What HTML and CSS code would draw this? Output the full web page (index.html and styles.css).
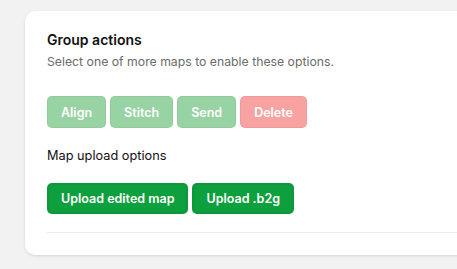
FILE: index.html
```html
<!DOCTYPE html>
<html>
<head>
<meta charset="utf-8">
<link rel="stylesheet" href="styles.css">
</head>
<body>
<div class="card">
  <h2 class="title">Group actions</h2>
  <p class="subtitle">Select one of more maps to enable these options.</p>
  <div class="row actions">
    <button class="btn btn-green" disabled>Align</button>
    <button class="btn btn-green" disabled>Stitch</button>
    <button class="btn btn-green" disabled>Send</button>
    <button class="btn btn-red" disabled>Delete</button>
  </div>
  <p class="label">Map upload options</p>
  <div class="row uploads">
    <button class="btn btn-primary">Upload edited map</button>
    <button class="btn btn-primary">Upload .b2g</button>
  </div>
  <hr class="divider">
</div>
</body>
</html>
```
FILE: styles.css
```css
html, body {
  margin: 0;
  padding: 0;
  background: #f2f2f2;
  overflow: hidden;
  font-family: Inter, "Liberation Sans", sans-serif;
}
body {
  padding: 11px 0 0 25px;
  width: 457px;
  height: 269px;
  box-sizing: border-box;
}
.card {
  width: 445px;
  background: #fff;
  border-radius: 10px;
  box-shadow: 0 1px 3px rgba(0,0,0,0.12);
  padding: 19px 0 22px 22px;
  box-sizing: border-box;
}
.title {
  margin: 0;
  font-size: 14px;
  line-height: 20px;
  font-weight: 600;
  color: #111;
}
.subtitle {
  margin: 2px 0 0;
  font-size: 12.25px;
  line-height: 20px;
  color: #6b6b6b;
}
.row {
  display: flex;
  gap: 4px;
}
.actions {
  margin-top: 24px;
}
.label {
  margin: 18px 0 0;
  font-size: 12.75px;
  line-height: 20px;
  color: #111;
}
.uploads {
  margin-top: 17px;
}
.btn {
  height: 32px;
  padding: 0 13px;
  border-radius: 5px;
  border: 1px solid rgba(0,0,0,0.04);
  font-family: Inter, "Liberation Sans", sans-serif;
  font-size: 12.5px;
  font-weight: 600;
  color: #fff;
  cursor: pointer;
}
.btn-green {
  background: #98d3a3;
}
.btn-red {
  background: #f8a3a1;
}
.btn-primary {
  background: #0e9f3e;
  height: 31px;
  box-shadow: inset 0 0 2px rgba(0,0,0,0.15);
}
.divider {
  margin: 18px 0 0;
  border: none;
  border-top: 1px solid #ececec;
}
```
